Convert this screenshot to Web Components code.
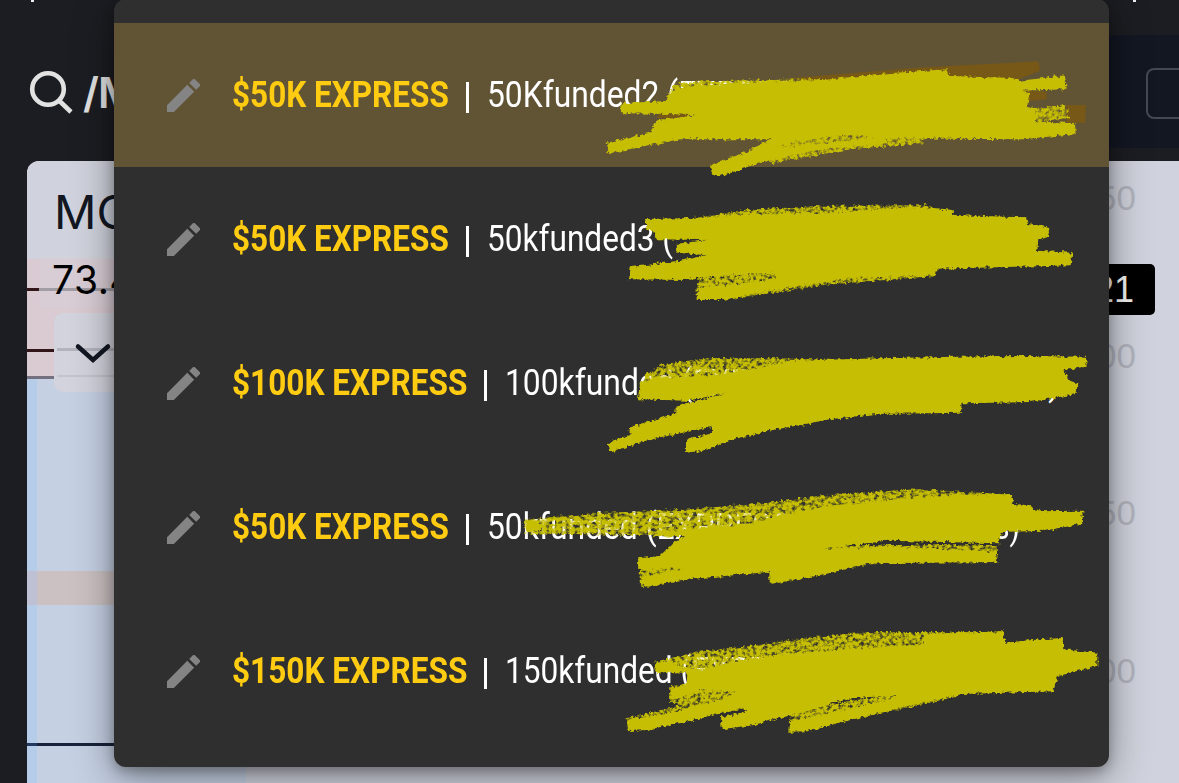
<!DOCTYPE html>
<html lang="en">
<head>
<meta charset="utf-8">
<title>Select account</title>
<style>
  body {
    margin: 0;
    width: 1179px;
    height: 783px;
    overflow: hidden;
    background: #1c1d22;
    font-family: Roboto, "Liberation Sans", sans-serif;
  }
</style>
</head>
<body>
<trading-page>
  <top-bar slot="header">/M</top-bar>
  <price-chart slot="chart"></price-chart>
  <account-menu slot="menu">
    <account-row selected plan="$50K EXPRESS" plan-width="217" name-width="325">50Kfunded2 (EXPRESS</account-row>
    <account-row plan="$50K EXPRESS" plan-width="217" name-width="186">50kfunded3 (</account-row>
    <account-row plan="$100K EXPRESS" plan-width="235" name-width="265" tail=")" tail-x="1048">100kfunded (EXPR</account-row>
    <account-row plan="$50K EXPRESS" plan-width="217" name-width="303" tail="s)" tail-x="994">50kfunded (EXPRESS</account-row>
    <account-row plan="$150K EXPRESS" plan-width="235" name-width="282">150kfunded (EXPRE</account-row>
    <marker-strokes slot="marks"></marker-strokes>
  </account-menu>
</trading-page>

<script>
class TradingPage extends HTMLElement {
  constructor() {
    super();
    this.attachShadow({ mode: 'open' }).innerHTML = `
      <style>
        :host {
          display: grid;
          grid-template-rows: 161px 622px;
          width: 1179px;
          height: 783px;
          position: relative;
          overflow: hidden;
        }
      </style>
      <slot name="header"></slot>
      <slot name="chart"></slot>
      <slot name="menu"></slot>
    `;
  }
}

class TopBar extends HTMLElement {
  constructor() {
    super();
    this.attachShadow({ mode: 'open' }).innerHTML = `
      <style>
        :host { display: flex; justify-content: space-between; background: #1c1d22; }
        .search { display: flex; padding: 68px 0 0 28px; color: #e2e2e2; }
        .symbol { margin: -3px 0 0 9px; font: 600 42px/56px Inter, sans-serif; letter-spacing: -1px; }
        .strip { margin-top: 35px; width: 79px; height: 113px; background: #131722; overflow: hidden; }
        .button {
          box-sizing: border-box;
          margin: 33px 0 0 46px;
          width: 80px;
          height: 51px;
          border: 2.500px solid #454852;
          border-radius: 8px;
        }
        i { position: absolute; top: 0; width: 3px; height: 2px; background: #eee; }
      </style>
      <div class="search">
        <svg width="46" height="48" viewBox="0 0 46 48" fill="none" stroke="currentColor" stroke-width="4.600">
          <circle cx="20" cy="21" r="15.800"/>
          <path d="M31 32.500L43 44"/>
        </svg>
        <div class="symbol"><slot></slot></div>
      </div>
      <div class="strip"><div class="button"></div></div>
      <i style="left:31px"></i>
      <i style="left:1133px"></i>
    `;
  }
}

class PriceChart extends HTMLElement {
  constructor() {
    super();
    this.attachShadow({ mode: 'open' }).innerHTML = `
      <style>
        :host {
          display: grid;
          grid-template-columns: 219px 1fr 110px;
          margin-left: 27px;
          border-top-left-radius: 12px;
          overflow: hidden;
          background: #d0d3dd;
          position: relative;
        }
        .bands { display: grid; grid-template-rows: 98px 120px 192px 34px 138px 3px 37px; }
        .bands div { background: #c5d0e3; box-shadow: inset 10px 0 #b5cde9; }
        .bands .plain { background: #d0d3dd; box-shadow: none; }
        .bands .sell {
          box-shadow: none;
          background:
            linear-gradient(#321519, #321519) 0 29px / 12px 3px no-repeat,
            linear-gradient(#817b83, #817b83) 0 29px / 100% 3px no-repeat,
            linear-gradient(#321519, #321519) 0 90px / 27px 3px no-repeat,
            linear-gradient(#747080, #747080) 0 117px / 100% 3px no-repeat,
            #dacad1;
        }
        .bands .order { background: #cbc1c3; box-shadow: inset 10px 0 #bec1d3; }
        .bands .level { background: #18223a; box-shadow: inset 10px 0 #233a60; }
        .axis { display: flex; flex-direction: column; font: 35px/50px "Liberation Sans", sans-serif; color: #b2b4be; }
        .axis span { height: 50px; text-align: right; padding-right: 43px; }
        .axis .last {
          width: 64px;
          box-sizing: border-box;
          height: 51px;
          margin: 41px 0 17px 22px;
          padding: 1px 21px 0 0;
          border-radius: 5px;
          background: #000;
          color: #f2f2f2;
          font-size: 36px;
        }
        /* legend floats above the bands */
        .legend { position: absolute; left: 12px; top: 23px; color: #131722; font-family: Inter, sans-serif; }
        .name { padding-left: 15px; font-size: 47px; line-height: 56px; height: 71px; }
        .value { padding-left: 13px; width: 87px; height: 52px; line-height: 50px; font-size: 39px; letter-spacing: .5px; color: #000; background: #d5d3d966; }
        .toggle {
          box-sizing: border-box;
          margin: 6px 0 0 15px;
          width: 90px;
          height: 79px;
          padding: 29px 0 0 20px;
          border-radius: 9px;
          background: linear-gradient(#b2b3bb, #b2b3bb) 3px 35px / 100% 3px no-repeat, linear-gradient(#c3c5cd, #c3c5cd) 3px 62px / 100% 2px no-repeat, #d2d3dc;
        }
      </style>
      <div class="bands">
        <div class="plain"></div>
        <div class="sell"></div>
        <div></div>
        <div class="order"></div>
        <div></div>
        <div class="level"></div>
        <div></div>
      </div>
      <div></div>
      <div class="axis">
        <span style="margin-top:12px">50</span>
        <span class="last">21</span>
        <span style="margin-top:-1px">00</span>
        <span style="margin-top:107px">50</span>
        <span style="margin-top:108px">00</span>
      </div>
      <div class="legend">
        <div class="name">MC</div>
        <div class="value">73.4</div>
        <div class="toggle">
          <svg width="38" height="24" viewBox="0 0 38 24" fill="none" stroke="#131722" stroke-width="4.500" stroke-linecap="round">
            <path d="M4 4.500L19 18L34 4.500"/>
          </svg>
        </div>
      </div>
    `;
  }
}

class AccountMenu extends HTMLElement {
  constructor() {
    super();
    this.attachShadow({ mode: 'open' }).innerHTML = `
      <style>
        :host {
          display: block;
          box-sizing: border-box;
          position: absolute;
          left: 114px;
          top: -1px;
          width: 995px;
          height: 768px;
          padding-top: 24px;
          border-radius: 12px;
          background: #2f2f2f;
          box-shadow: 0 10px 40px rgba(0, 0, 0, .42), 0 4px 12px rgba(0, 0, 0, .25);
        }
      </style>
      <slot></slot>
      <slot name="marks"></slot>
    `;
  }
}

// Squeezes its text horizontally until it is exactly `width` pixels wide
class FitText extends HTMLElement {
  constructor() {
    super();
    this.attachShadow({ mode: 'open' }).innerHTML = `
      <style>
        :host { display: block; flex: none; }
        span { display: inline-block; white-space: pre; transform-origin: 0 50%; }
      </style>
      <span><slot></slot></span>
    `;
  }

  connectedCallback() {
    const width = Number(this.getAttribute('width'));
    const span = this.shadowRoot.querySelector('span');
    this.style.width = `${width}px`;
    span.style.transform = `scaleX(${width / span.offsetWidth})`;
  }
}

class AccountRow extends HTMLElement {
  constructor() {
    super();
    this.attachShadow({ mode: 'open' });
  }

  connectedCallback() {
    const tail = this.getAttribute('tail');
    this.shadowRoot.innerHTML = `
      <style>
        :host {
          display: flex;
          position: relative;
          height: 144px;
          padding-left: 53px;
          align-items: center;
          box-sizing: border-box;
          color: #fff;
          font: 36px/44px Roboto, sans-serif;
        }
        :host([selected]) { background: #615434; }
        svg { display: block; flex: none; fill: #848484; }
        .plan { margin-left: 32px; color: #fc1; font-weight: 700; }
        .bar { width: 3px; height: 31px; margin: 4px 18px 0 17px; background: #fff; }
        .tail { position: absolute; top: 50px; left: ${this.getAttribute('tail-x') - 114}px; }
      </style>
      <svg width="33" height="33" viewBox="3 3 18 18">
        <path d="M3 17.250V21h3.750L17.810 9.940l-3.750-3.750L3 17.250zM20.710 7.040a1 1 0 0 0 0-1.410l-2.340-2.340a1 1 0 0 0-1.410 0l-1.830 1.830 3.750 3.750 1.830-1.830z"/>
      </svg>
      <fit-text class="plan" width="${this.getAttribute('plan-width')}">${this.getAttribute('plan')}</fit-text>
      <div class="bar"></div>
      <fit-text width="${this.getAttribute('name-width')}">${this.textContent}</fit-text>
      ${tail ? `<fit-text class="tail" width="${tail.length * 13}">${tail}</fit-text>` : ''}
    `;
  }
}

class MarkerStrokes extends HTMLElement {
  constructor() {
    super();
    this.attachShadow({ mode: 'open' }).innerHTML = `
      <style>
        :host { display: block; position: absolute; left: 0; top: 1px; }
        svg { display: block; }
        .solid { fill: #c6be02; filter: url(#rough); }
        .dry { fill: #c6be02; filter: url(#chalk); }
        .under { fill: #785817; }
      </style>
      <svg width="995" height="767" viewBox="114 0 995 767">
        <defs>
          <filter id="rough" x="-5%" y="-10%" width="110%" height="120%" color-interpolation-filters="sRGB">
            <feTurbulence type="fractalNoise" baseFrequency=".09" numOctaves="3" seed="4"/>
            <feDisplacementMap in="SourceGraphic" scale="17" xChannelSelector="R" yChannelSelector="G"/>
            <feGaussianBlur stdDeviation="1.200"/>
          </filter>
          <filter id="chalk" x="-5%" y="-20%" width="110%" height="140%" color-interpolation-filters="sRGB">
            <feTurbulence type="fractalNoise" baseFrequency=".09" numOctaves="3" seed="8" result="n"/>
            <feDisplacementMap in="SourceGraphic" in2="n" scale="18" xChannelSelector="R" yChannelSelector="G" result="s"/>
            <feColorMatrix in="n" values="0 0 0 0 0  0 0 0 0 0  0 0 0 0 0  0 0 3 0 -.680" result="m"/>
            <feComposite in="s" in2="m" operator="in"/>
            <feGaussianBlur stdDeviation="1.600"/>
          </filter>
        </defs>

        <g transform="translate(590 50) scale(.33333)">
          <path class="under" d="M600 85L1000 52L1345 34L1350 62L1280 90L1080 82L700 96ZM1310 122L1370 125L1370 148L1310 154ZM1430 165L1488 165L1485 218L1430 218ZM210 190L300 192L290 204L200 204Z"/>
          <path class="dry" d="M1290 178L1430 166L1436 205L1300 218ZM520 275L760 250L1000 242L1000 280L780 298L540 340ZM250 102L330 94L700 87L700 120L240 130Z"/>
          <path class="solid" d="M238 130L290 110L420 102L700 90L860 72L1073 58L1078 78L1270 84L1292 92L1425 76L1430 118L1295 122L1318 130L1312 168L1338 176L1338 214L1455 220L1457 252L1300 268L1060 266L900 264L760 254L600 278L560 292L720 278L880 258L900 282L700 296L520 336L390 379L364 370L364 345L470 304L545 268L270 268L150 291L56 311L50 278L178 248L205 210L320 196L240 192L96 190L94 160L228 153Z"/>
        </g>

        <g transform="translate(590 190) scale(.33333)">
          <path class="dry" d="M330 84L460 60L700 47L1010 46L1010 80L300 98ZM330 260L560 246L1040 235L1035 258L700 285L440 325L320 300Z"/>
          <path class="solid" d="M165 87L300 84L430 76L700 68L1000 50L1088 60L1090 75L1308 82L1312 98L1378 113L1374 142L1345 148L1342 182L1447 188L1442 226L1220 232L1040 236L1038 256L790 264L640 284L490 312L400 330L320 330L320 292L420 284L570 266L550 248L360 262L290 270L118 268L118 232L270 212L350 196L262 188L260 162L350 150L200 148L190 125L170 115Z"/>
        </g>

        <g transform="translate(590 340) scale(.33333)">
          <path class="dry" d="M165 105L220 72L360 54L560 55L750 60L740 100L400 115L160 130Z"/>
          <path class="solid" d="M150 128L190 114L350 108L500 86L600 62L900 54L1100 50L1300 48L1488 50L1490 80L1420 90L1440 122L1462 130L1460 162L1320 186L1115 190L1112 218L860 222L720 238L550 270L430 298L340 332L288 338L288 300L366 280L366 260L230 288L140 310L60 338L56 306L118 285L120 260L255 222L258 200L410 160L290 182L144 178Z"/>
        </g>

        <g transform="translate(470 480) scale(.40816 .33333)">
          <path class="dry" d="M135 120L300 100L520 90L720 70L920 40L1100 28L1300 42L1300 75L800 110L600 160L400 165L135 160ZM415 235L620 225L900 195L1290 195L1293 245L980 250L735 312L730 275L620 280L420 320Z"/>
          <path class="solid" d="M137 122L170 122L172 152L137 157ZM450 158L530 148L700 130L760 105L900 74L1150 46L1325 42L1330 72L1370 75L1390 94L1500 92L1502 130L1410 152L1300 156L1298 190L1020 182L860 208L1030 200L1288 215L1292 246L980 250L860 285L738 311L735 275L520 300L422 321L420 290L530 264L412 270L412 235L465 228L500 185L530 168L450 170Z"/>
        </g>

        <g transform="translate(590 620) scale(.33333)">
          <path class="dry" d="M195 125L320 96L480 78L700 48L850 36L1240 36L1240 80L700 100L350 150L200 158ZM240 200L430 195L500 260L350 285L115 330L110 295L280 255L240 245ZM600 270L900 225L1100 210L1100 230L800 295L600 335Z"/>
          <path class="solid" d="M195 128L245 124L270 142L330 150L440 124L590 102L760 88L1000 74L1010 42L1240 34L1246 68L1350 58L1418 54L1420 88L1522 98L1522 138L1405 168L1388 214L1120 222L900 270L740 310L650 334L598 335L600 304L900 238L920 225L770 236L650 274L490 315L395 328L393 292L465 276L460 262L300 302L170 330L114 333L112 300L240 280L400 235L440 215L330 210L242 242L242 208L290 192L292 158L198 155Z"/>
        </g>
      </svg>
    `;
  }
}

customElements.define('trading-page', TradingPage);
customElements.define('top-bar', TopBar);
customElements.define('price-chart', PriceChart);
customElements.define('fit-text', FitText);
customElements.define('account-row', AccountRow);
customElements.define('account-menu', AccountMenu);
customElements.define('marker-strokes', MarkerStrokes);
</script>
</body>
</html>
